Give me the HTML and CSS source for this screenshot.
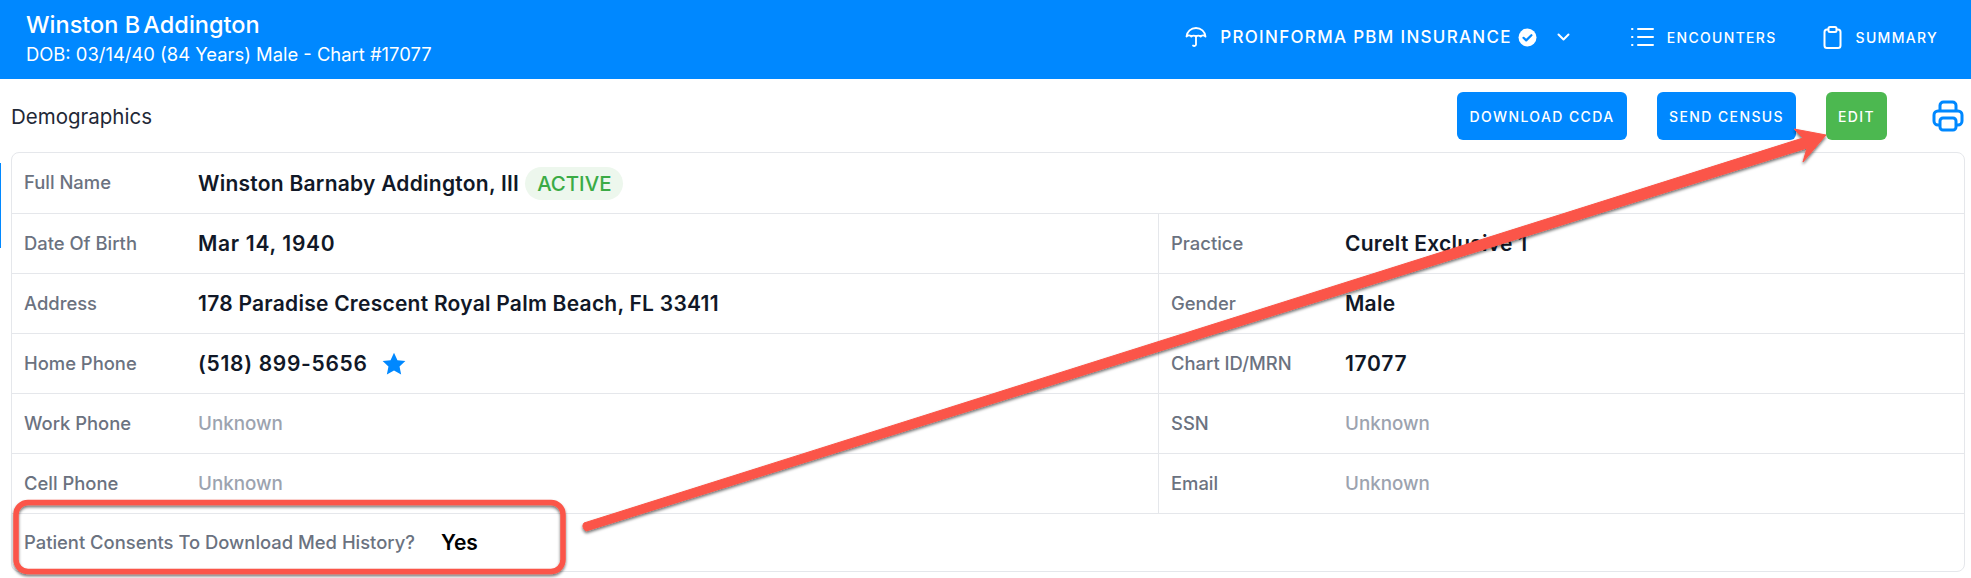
FILE: index.html
```html
<!DOCTYPE html>
<html lang="en">
<head>
  <meta charset="UTF-8">
  <title>Demographics</title>
  <link rel="stylesheet" href="styles.css">
</head>
<body>
  <header class="topbar">
    <div class="patient">
      <div class="patient-name">Winston <span class="tight">B Addington</span></div>
      <div class="patient-sub">DOB: 03/14/40 (84 Years) Male - Chart #17077</div>
    </div>
    <nav class="topnav">
      <div class="insurance">
        <svg class="ic-umbrella" width="22" height="22" viewBox="0 0 22 22" fill="none" stroke="#fff" stroke-width="1.8" stroke-linecap="round" stroke-linejoin="round">
          <path d="M1.500 10.500C2 5.500 6 2 11 2s9 3.500 9.500 8.500c-1.500-1.300-3.500-1.300-4.800 0-1.300-1.300-3.400-1.300-4.700 0-1.300-1.300-3.400-1.300-4.700 0-1.300-1.300-3.300-1.300-4.800 0z"/>
          <path d="M11 10.500v8a1.800 1.800 0 0 1-3 1"/>
        </svg>
        <span class="insurance-name">PROINFORMA PBM INSURANCE</span>
        <svg class="ic-check" width="19" height="19" viewBox="0 0 19 19">
          <circle cx="9.500" cy="9.500" r="9" fill="#fff"/>
          <path d="M5.500 9.800l2.700 2.600 5.200-5.200" fill="none" stroke="#0088ff" stroke-width="2.200" stroke-linecap="round" stroke-linejoin="round"/>
        </svg>
        <svg class="ic-chevron" width="13" height="8" viewBox="0 0 13 8" fill="none" stroke="#fff" stroke-width="2" stroke-linecap="round" stroke-linejoin="round">
          <path d="M1.500 1.500l5 5 5-5"/>
        </svg>
      </div>
      <div class="navlink nav-encounters">
        <svg width="23" height="20" viewBox="0 0 23 20" fill="none" stroke="#fff" stroke-width="2" stroke-linecap="round">
          <path d="M7 2h15M7 10h15M7 18h15M1 2h.5M1 10h.5M1 18h.5"/>
        </svg>
        <span>ENCOUNTERS</span>
      </div>
      <div class="navlink nav-summary">
        <svg width="19" height="23" viewBox="0 0 19 23" fill="none" stroke="#fff" stroke-width="2" stroke-linejoin="round">
          <path d="M5.500 3.500H4A2.500 2.500 0 0 0 1.500 6v13.500A2.500 2.500 0 0 0 4 22h11a2.500 2.500 0 0 0 2.500-2.500V6A2.500 2.500 0 0 0 15 3.500h-1.500"/>
          <rect x="5.500" y="1" width="8" height="5" rx="1.500"/>
        </svg>
        <span>SUMMARY</span>
      </div>
    </nav>
  </header>

  <main class="content">
    <div class="toolbar">
      <h1 class="section-title">Demographics</h1>
      <div class="actions">
        <button class="btn btn-ccda">DOWNLOAD CCDA</button>
        <button class="btn btn-census">SEND CENSUS</button>
        <button class="btn btn-edit">EDIT</button>
        <svg class="ic-print" width="32" height="32" viewBox="0 0 32 32" fill="none" stroke="#0088ff" stroke-width="3" stroke-linejoin="round">
          <path d="M8 11V5.500A3.500 3.500 0 0 1 11.500 2h9A3.500 3.500 0 0 1 24 5.500V11"/>
          <path d="M8 25H6a4 4 0 0 1-4-4v-6a4 4 0 0 1 4-4h20a4 4 0 0 1 4 4v6a4 4 0 0 1-4 4h-2"/>
          <rect x="8" y="18" width="16" height="12" rx="3"/>
        </svg>
      </div>
    </div>

    <section class="card">
      <div class="row row-first">
        <div class="cell">
          <span class="label">Full Name</span>
          <span class="value">Winston Barnaby Addington, III</span>
          <span class="badge">ACTIVE</span>
        </div>
      </div>
      <div class="row row-split">
        <div class="cell"><span class="label">Date Of Birth</span><span class="value num">Mar 14, 1940</span></div>
        <div class="cell"><span class="label">Practice</span><span class="value">CureIt Exclusive 1</span></div>
      </div>
      <div class="row row-split">
        <div class="cell"><span class="label">Address</span><span class="value">178 Paradise Crescent Royal Palm Beach, FL 33411</span></div>
        <div class="cell"><span class="label">Gender</span><span class="value">Male</span></div>
      </div>
      <div class="row row-split">
        <div class="cell">
          <span class="label">Home Phone</span>
          <span class="value num">(518) 899-5656</span>
          <svg class="ic-star" width="26" height="26" viewBox="0 0 24 24"><path fill="#0088ff" d="M12 1.500l3.200 7 7.300.8-5.400 5 1.500 7.400-6.600-3.700-6.600 3.700 1.500-7.400-5.400-5 7.300-.8z"/></svg>
        </div>
        <div class="cell"><span class="label">Chart ID/MRN</span><span class="value num">17077</span></div>
      </div>
      <div class="row row-split">
        <div class="cell"><span class="label">Work Phone</span><span class="value unknown">Unknown</span></div>
        <div class="cell"><span class="label">SSN</span><span class="value unknown">Unknown</span></div>
      </div>
      <div class="row row-split">
        <div class="cell"><span class="label">Cell Phone</span><span class="value unknown">Unknown</span></div>
        <div class="cell"><span class="label">Email</span><span class="value unknown">Unknown</span></div>
      </div>
      <div class="row row-last">
        <div class="cell">
          <span class="label label-wide">Patient Consents To Download Med History?</span>
          <span class="value value-yes">Yes</span>
        </div>
      </div>
    </section>
  </main>

  <div class="side-mark"></div>

  <svg class="annotation" width="1971" height="578" viewBox="0 0 1971 578">
    <defs>
      <filter id="shade" x="-5%" y="-5%" width="110%" height="115%">
        <feDropShadow dx="0" dy="2" stdDeviation="1.500" flood-color="#000" flood-opacity="0.55"/>
      </filter>
    </defs>
    <g filter="url(#shade)">
      <rect x="16" y="502.500" width="547" height="69" rx="12" fill="none" stroke="#fb5548" stroke-width="5.500"/>
      <path fill="#fb5548" stroke="#fb5548" stroke-width="1" stroke-linejoin="round" d="M584 523L1803 138 1794 129 1826 135 1803 162 1807 148 586 531Q581 527 584 523z"/>
    </g>
  </svg>
</body>
</html>
```

FILE: styles.css
```css
* {
  margin: 0;
  padding: 0;
  box-sizing: border-box;
}
html, body {
  width: 100%;
  height: 100%;
  overflow: hidden;
  background: #fff;
  font-family: 'Inter', 'Liberation Sans', sans-serif;
}
body {
  position: relative;
}

/* top bar */
.topbar {
  display: flex;
  justify-content: space-between;
  height: 79px;
  padding: 0 33px 0 26px;
  background: #0088ff;
  color: #fff;
}
.patient {
  padding-top: 12px;
}
.patient-name {
  font-size: 23.500px;
  font-weight: 500;
  line-height: 26px;
}
.tight {
  word-spacing: -3px;
}
.patient-sub {
  margin-top: 5px;
  font-size: 18.400px;
  line-height: 22px;
}
.topnav {
  display: flex;
  align-items: flex-start;
  padding-top: 26px;
}
.insurance {
  display: flex;
  align-items: center;
  height: 22px;
  margin-right: 61px;
}
.insurance-name {
  margin-left: 13px;
  font-size: 17px;
  font-weight: 500;
  letter-spacing: 1.300px;
}
.ic-check {
  margin-left: 6px;
}
.ic-chevron {
  margin-left: 20px;
}
.navlink {
  display: flex;
  align-items: center;
  height: 22px;
  font-size: 14px;
  font-weight: 500;
  letter-spacing: 1.300px;
}
.nav-encounters svg {
  margin-right: 13px;
}
.nav-encounters {
  margin-right: 46px;
}
.nav-summary svg {
  margin-right: 14px;
}

/* demographics */
.content {
  padding: 13px 6px 0 11px;
}
.toolbar {
  display: flex;
  justify-content: space-between;
  height: 48px;
  margin-bottom: 12px;
}
.section-title {
  align-self: center;
  font-size: 20.500px;
  font-weight: 400;
  color: #1f2937;
}
.actions {
  display: flex;
  align-items: flex-start;
  margin-right: 1px;
}
.btn {
  height: 48px;
  border: none;
  border-radius: 6px;
  background: #0088ff;
  color: #fff;
  font-family: inherit;
  font-size: 14px;
  font-weight: 500;
  letter-spacing: 1.400px;
}
.btn-ccda {
  width: 170px;
  margin-right: 30px;
}
.btn-census {
  width: 139px;
  margin-right: 30px;
}
.btn-edit {
  width: 61px;
  margin-right: 45px;
  background: #4cb850;
}
.ic-print {
  margin-top: 8px;
}
.card {
  height: 420px;
  border: 1px solid #e5e7eb;
  border-radius: 8px;
}
.row {
  display: flex;
  height: 60px;
  border-bottom: 1px solid #e5e7eb;
}
.row-first {
  height: 61px;
}
.row-last {
  height: 57px;
  border-bottom: none;
}
.row-split .cell:first-child {
  width: 1147px;
  border-right: 1px solid #e5e7eb;
}
.cell {
  display: flex;
  flex: none;
  align-items: center;
  padding-left: 12px;
}
.row-split .cell:last-child {
  flex: 1;
}
.label {
  width: 174px;
  flex: none;
  padding-bottom: 2px;
  font-size: 18.400px;
  font-weight: 500;
  color: #6b7280;
}
.label-wide {
  width: auto;
}
.value {
  font-size: 21px;
  font-weight: 600;
  letter-spacing: 0.250px;
  color: #111827;
}
.num {
  letter-spacing: 0.700px;
}
.value-yes {
  margin-left: 26px;
  letter-spacing: 0;
  color: #000;
}
.unknown {
  font-size: 18.800px;
  font-weight: 500;
  letter-spacing: 0;
  color: #9ca3af;
}
.badge {
  margin-left: 6px;
  padding: 0 12px;
  border-radius: 17px;
  background: #edf7ed;
  color: #3bab45;
  font-size: 20.400px;
  font-weight: 500;
  line-height: 33px;
}
.ic-star {
  margin-left: 13px;
}

/* things laid over the page */
.side-mark {
  position: absolute;
  left: 0;
  top: 163px;
  width: 1px;
  height: 85px;
  background: #0088ff;
  box-shadow: 2px 0 10px rgba(0, 0, 0, 0.08);
}
.annotation {
  position: absolute;
  left: 0;
  top: 0;
  pointer-events: none;
}
```
